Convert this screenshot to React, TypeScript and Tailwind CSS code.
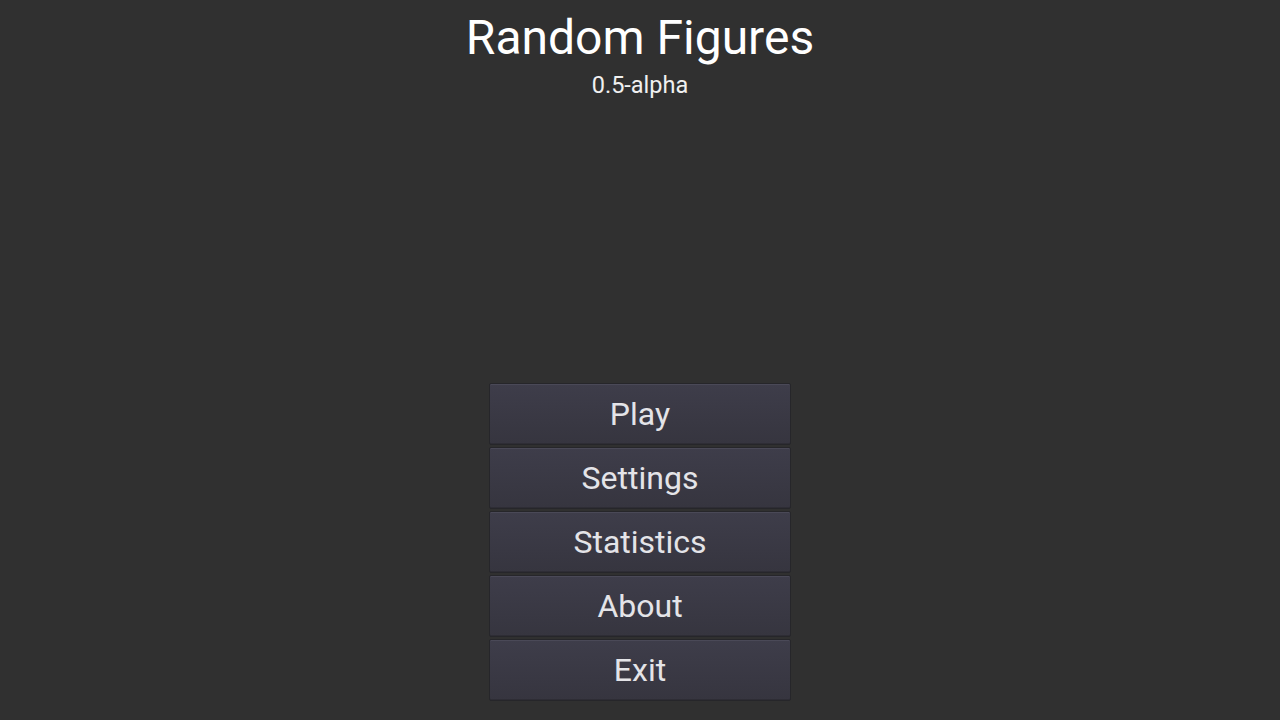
const items = ["Play", "Settings", "Statistics", "About", "Exit"];

export default function App() {
  return (
    <div
      className="flex h-screen w-full flex-col items-center justify-between bg-[#303030] pb-[19px]"
      style={{ fontFamily: "Roboto, 'Noto Sans', sans-serif" }}
    >
      <div className="flex flex-col items-center pt-[9px]">
        <h1 className="text-[48px] leading-[58px] text-white">Random Figures</h1>
        <p className="mt-[3px] text-[23.5px] leading-[30px] text-[#f0f0f0]">0.5-alpha</p>
      </div>

      <div className="flex w-[302px] flex-col gap-[2px]">
        {items.map((label) => (
          <button
            key={label}
            className="flex h-[62px] items-center justify-center rounded-[2px] border border-[#26262a] bg-gradient-to-b from-[#3e3d4a] to-[#36353f] text-[32px] text-[#e4e4e8] shadow-[inset_0_1px_0_#4a4957,inset_0_-1px_0_#2e2d35]"
          >
            {label}
          </button>
        ))}
      </div>
    </div>
  );
}
